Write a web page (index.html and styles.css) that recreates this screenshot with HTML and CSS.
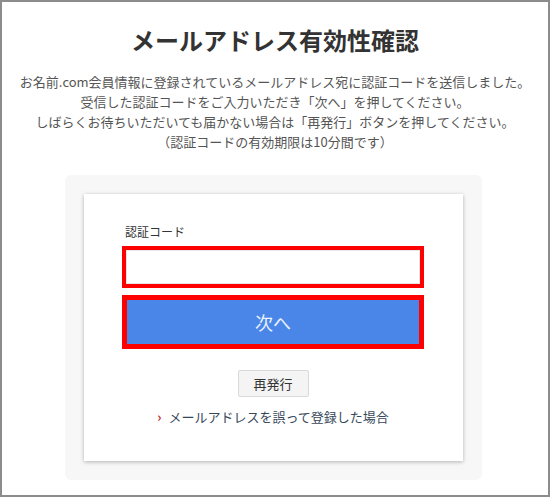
FILE: index.html
```html
<!DOCTYPE html>
<html lang="ja">
<head>
<meta charset="utf-8">
<title>メールアドレス有効性確認</title>
<link rel="stylesheet" href="styles.css">
</head>
<body>
<div class="frame">
  <h1 class="title">メールアドレス有効性確認</h1>
  <p class="lead">お名前.com会員情報に登録されているメールアドレス宛に認証コードを送信しました。<br>受信した認証コードをご入力いただき「次へ」を押してください。<br>しばらくお待ちいただいても届かない場合は「再発行」ボタンを押してください。<br>（認証コードの有効期限は10分間です）</p>
  <div class="panel">
    <div class="card">
      <label class="label" for="code">認証コード</label>
      <input class="code-input" id="code" type="text">
      <button class="next-btn" type="button">次へ</button>
      <div class="reissue-row"><button class="reissue-btn" type="button">再発行</button></div>
      <div class="link-row"><span class="arrow">›</span><a class="link" href="#">メールアドレスを誤って登録した場合</a></div>
    </div>
  </div>
</div>
</body>
</html>
```
FILE: styles.css
```css
* { box-sizing: border-box; }
html, body { margin: 0; padding: 0; background: #fff; }
body {
  font-family: "Noto Sans CJK JP", "Noto Sans", sans-serif;
  color: #333;
}
.frame {
  width: 550px;
  height: 497px;
  border: 2px solid #8c8c8c;
  background: #fff;
  padding-top: 23px;
}
.title {
  margin: 0;
  text-align: center;
  font-size: 24px;
  line-height: 30px;
  font-weight: bold;
  color: #333;
}
.lead {
  margin: 17px 0 0;
  text-align: center;
  font-size: 13px;
  line-height: 20px;
  color: #555;
}
.panel {
  width: 417px;
  margin: 23px 0 0 63px;
  background: #f7f7f7;
  border-radius: 6px;
  padding: 19px;
}
.card {
  background: #fff;
  box-shadow: 0 1px 4px rgba(0, 0, 0, 0.28);
  padding: 29px 39px 34px 38px;
  display: flex;
  flex-direction: column;
}
.label {
  font-size: 12px;
  line-height: 18px;
  color: #333;
  margin-left: 3px;
  margin-bottom: 5px;
}
.code-input {
  display: block;
  width: 302px;
  height: 42px;
  border: 4px solid #ff0000;
  box-shadow: inset 0 0 0 1px #e6e6e6;
  background: #fff;
  outline: none;
  margin: 0;
  padding: 0 8px;
}
.next-btn {
  display: block;
  width: 302px;
  height: 54px;
  margin-top: 7px;
  border: 5px solid #ff0000;
  background: #4a86e8;
  color: #e8f1ff;
  font-family: inherit;
  font-size: 18px;
  line-height: 20px;
  padding: 0;
}
.reissue-row {
  display: flex;
  justify-content: center;
  margin-top: 21px;
}
.reissue-btn {
  width: 71px;
  height: 27px;
  background: #f4f4f4;
  border: 1px solid #d9d9d9;
  border-radius: 2px;
  color: #333;
  font-family: inherit;
  font-size: 13px;
  line-height: 20px;
  padding: 0;
}
.link-row {
  display: flex;
  justify-content: center;
  align-items: center;
  margin-top: 10px;
  line-height: 20px;
  font-size: 13px;
}
.arrow {
  color: #c3272b;
  font-size: 13px;
  font-weight: bold;
  margin-right: 7px;
}
.link {
  color: #36475a;
  text-decoration: none;
}
```
